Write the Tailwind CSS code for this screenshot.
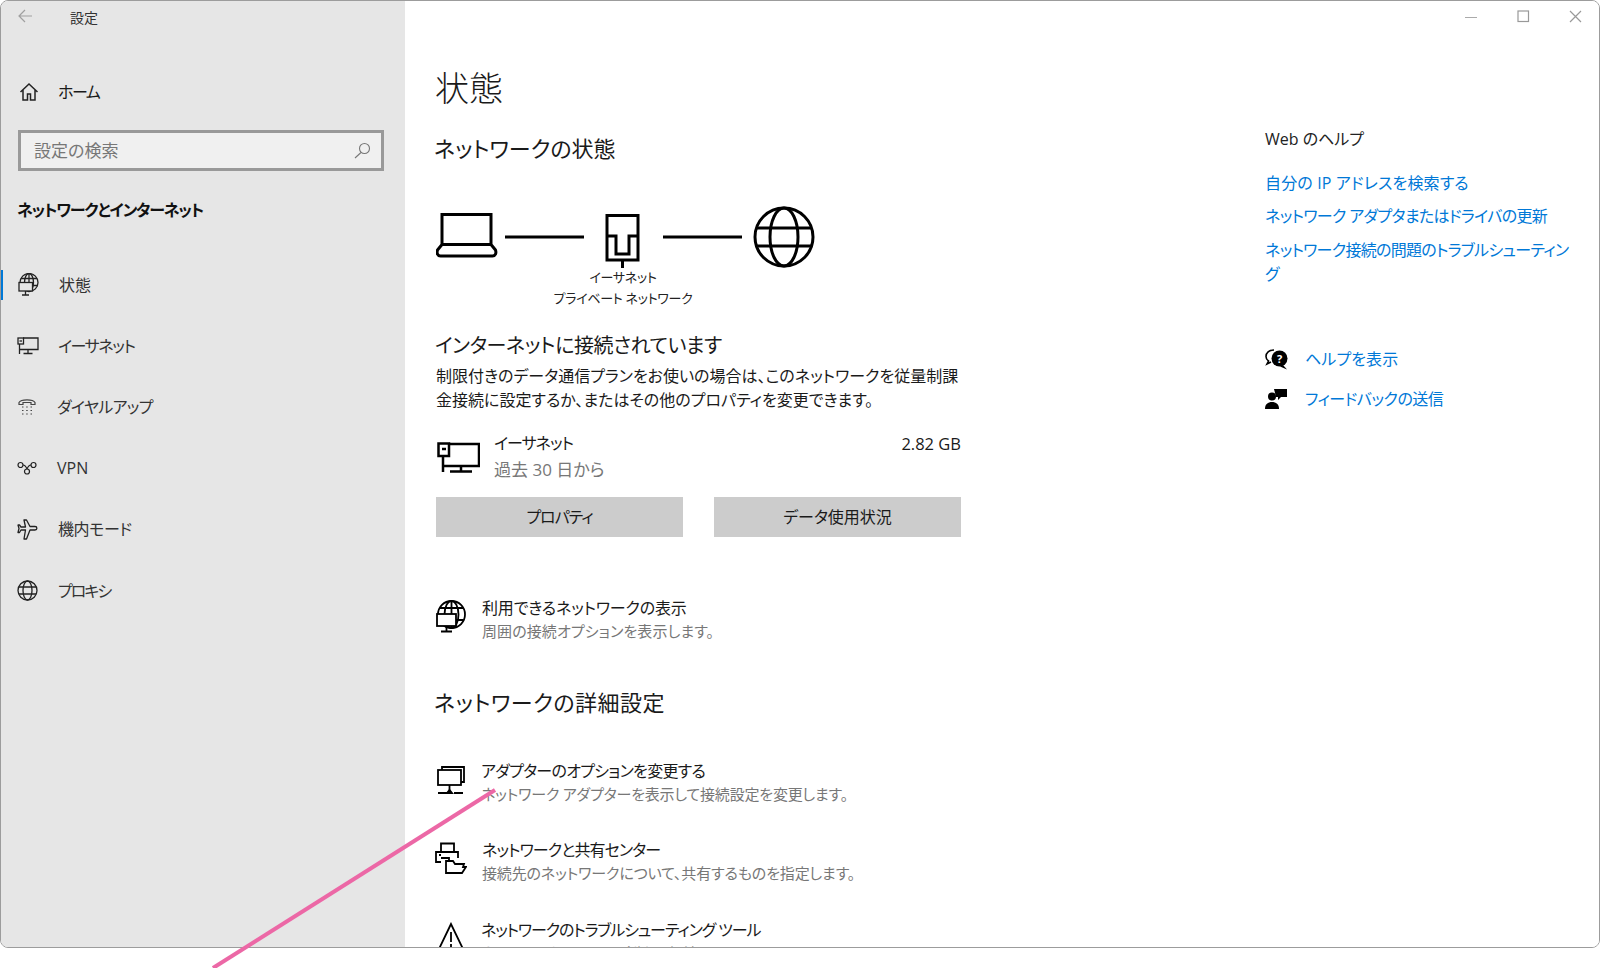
<!DOCTYPE html>
<html lang="ja">
<head>
  <meta charset="UTF-8">
  <title>設定</title>
  <script src="https://cdn.jsdelivr.net/npm/@tailwindcss/browser@4"></script>
</head>
<body class="bg-white w-[1600px] h-[968px] overflow-hidden relative text-[#1a1a1a] font-['Open_Sans','Noto_Sans_CJK_JP',sans-serif] [font-feature-settings:'palt']">

  <!-- window -->
  <div class="w-[1600px] h-[948px] border border-[#9c9c9c] rounded-[8px] overflow-hidden flex">

    <!-- sidebar -->
    <aside class="w-[404px] shrink-0 bg-[#e6e6e6]">
      <div class="h-[36px] flex items-center text-[14px] text-[#333]">
        <svg class="ml-[17px] -mt-[6px]" width="15" height="14" viewBox="0 0 15 14" fill="none" stroke="#a0a0a0" stroke-width="1.2"><path d="M14 7H1M7 1 1 7l6 6"/></svg>
        <span class="ml-[37px] -mt-[3px]">設定</span>
      </div>
      <div class="mt-[35px] h-[40px] flex items-center text-[16px]">
        <svg class="ml-[18px]" width="20" height="20" viewBox="0 0 20 20" fill="none" stroke="#222" stroke-width="1.5"><path d="M1.500 10 10 2l8.500 8M4 8v10h4.500v-6h3v6H16V8"/></svg>
        <span class="ml-[19px] tracking-[-1.500px]">ホーム</span>
      </div>
      <div class="mt-[18px] ml-[17px] w-[366px] h-[41px] border-[3px] border-[#999] bg-[#f0f0f0] flex items-center justify-between pl-[13px] pr-[10px] text-[17px] text-[#777]">
        <span>設定の検索</span>
        <svg width="17" height="17" viewBox="0 0 17 17" fill="none" stroke="#777" stroke-width="1.1"><circle cx="10.500" cy="6.500" r="5"/><path d="M7 10.500 1 16"/></svg>
      </div>
      <div class="mt-[27px] ml-[16px] h-[24px] leading-[24px] text-[16px] font-bold text-[#111] tracking-[-1.200px]">ネットワークとインターネット</div>

      <nav class="mt-[32px] text-[16px] text-[#333]">
        <div class="h-[61.200px] flex items-center">
          <span class="w-[2px] h-[30px] bg-[#0078d7] mr-[15px]"></span>
          <svg width="21" height="23" viewBox="0 0 21 23" fill="none" stroke="#222" stroke-width="1.3"><circle cx="11" cy="9.500" r="9"/><ellipse cx="11" cy="9.500" rx="4.500" ry="9"/><path d="M11 .500v10M3 5.500h16M3 12.500h17"/><rect x="1" y="9.500" width="13.500" height="8.500" fill="#e6e6e6"/><path d="M7.500 18v4M4 22h7"/></svg>
          <span class="ml-[20px]">状態</span>
        </div>
        <div class="h-[61.200px] flex items-center">
          <svg class="ml-[16px]" width="22" height="18" viewBox="0 0 22 18" fill="none" stroke="#222" stroke-width="1.3"><path d="M6 1h15v11.500H2M2.500 7v10M11 12.500V16.500M6.500 16.500h9"/><rect x="1" y="1" width="5.500" height="6"/><path d="M2.500 4h2.500"/></svg>
          <span class="ml-[19px] tracking-[-1.400px]">イーサネット</span>
        </div>
        <div class="h-[61.200px] flex items-center">
          <svg class="ml-[16px]" width="20" height="18" viewBox="0 0 20 18" fill="none" stroke="#444" stroke-width="1.2"><path d="M2 6.500V4.500C4 1 16 1 18 4.500v2h-4V4.500H6v2z"/><path d="M5 9h1.500M9.200 9h1.500M13.500 9H15M5 12.500h1.500M9.200 12.500h1.500M13.500 12.500H15M5 16h1.500M9.200 16h1.500M13.500 16H15"/></svg>
          <span class="ml-[20px] tracking-[-0.700px]">ダイヤルアップ</span>
        </div>
        <div class="h-[61.200px] flex items-center">
          <svg class="ml-[16px]" width="20" height="14" viewBox="0 0 20 14" fill="none" stroke="#222" stroke-width="1.2"><circle cx="3.500" cy="4" r="2.500"/><circle cx="16.500" cy="4" r="2.500"/><circle cx="10" cy="10.500" r="2.500"/><path d="M6 4c2 0 3 1.500 4 4M14 4c-2 0-3 1.500-4 4"/></svg>
          <span class="ml-[20px]">VPN</span>
        </div>
        <div class="h-[61.200px] flex items-center">
          <svg class="ml-[16px]" width="21" height="21" viewBox="0 0 21 21" fill="none" stroke="#222" stroke-width="1.3" stroke-linejoin="round"><path d="M7 1h2.500L13 7.500h5c2.500 0 2.500 3.500 0 3.500h-5L9.500 20H7l1.500-9H4l-1.500 2.500H1L2 9.500 1 6h1.500L4 8h4.500z"/></svg>
          <span class="ml-[20px] tracking-[-0.400px]">機内モード</span>
        </div>
        <div class="h-[61.200px] flex items-center">
          <svg class="ml-[16px]" width="21" height="21" viewBox="0 0 21 21" fill="none" stroke="#222" stroke-width="1.300"><circle cx="10.500" cy="10.500" r="9.500"/><ellipse cx="10.500" cy="10.500" rx="4.500" ry="9.500"/><path d="M2 7h17M2 14h17"/></svg>
          <span class="ml-[20px] tracking-[-2px]">プロキシ</span>
        </div>
      </nav>
    </aside>

    <!-- content -->
    <main class="flex-1 flex bg-white relative">
      <section class="w-[560px] pl-[31px] pt-[65px] shrink-0">
        <h1 class="-ml-[1px] h-[44px] leading-[44px] text-[34px] font-light">状態</h1>
        <h2 class="mt-[23px] -ml-[2px] h-[30px] leading-[30px] text-[22px]">ネットワークの状態</h2>

        <!-- diagram -->
        <div class="mt-[42px] w-[381px]">
          <svg class="block" width="381" height="63" viewBox="0 0 381 63" fill="none" stroke="#000" stroke-width="3">
            <path d="M6 9.500h49v30H6zM6 39.500 1.500 45c-1 3 0 6 3 6h52c3 0 4-3 3-6L55 39.500"/>
            <path d="M69 32h79M227 32h79"/>
            <path d="M171 10.500h31v44.500h-31zM171 31h9v18h13V31h9M186.500 55v8"/>
            <circle cx="348" cy="32" r="29"/>
            <ellipse cx="348" cy="32" rx="14" ry="29"/>
            <path d="M320 23h56M320 41h56"/>
          </svg>
          <div class="-mt-[1px] w-[374px] text-center text-[13px] leading-[21px] text-[#222] tracking-[-0.300px]">イーサネット<br>プライベート ネットワーク</div>
        </div>

        <h3 class="-ml-[1px] mt-[23px] h-[28px] leading-[28px] text-[20px] tracking-[-0.400px]">インターネットに接続されています</h3>
        <p class="mt-[4px] w-[530px] text-[16px] leading-[24px]">制限付きのデータ通信プランをお使いの場合は、このネットワークを従量制課<br>金接続に設定するか、またはその他のプロパティを変更できます。</p>

        <div class="mt-[18px] w-[525px] flex">
          <svg class="ml-[1px] mt-[12px]" width="43" height="31" viewBox="0 0 43 31" fill="none" stroke="#000" stroke-width="2.500"><path d="M12 2h30v22H6M6 14v16M24 24v5.500M13 29.500h22"/><rect x="1.500" y="1.500" width="10.500" height="12.500"/><path d="M5 7h4"/></svg>
          <div class="ml-[14px] text-[16px] leading-[27px]">
            <div class="tracking-[-1px]">イーサネット</div>
            <div class="text-[17px] text-[#777] -mt-[1px]">過去 30 日から</div>
          </div>
          <div class="ml-auto text-[16.500px] leading-[27px]">2.82 GB</div>
        </div>

        <div class="mt-[14px] flex gap-[31px] text-[16px]">
          <button class="w-[247px] h-[40px] bg-[#cccccc] tracking-[-1px]">プロパティ</button>
          <button class="w-[247px] h-[40px] bg-[#cccccc]">データ使用状況</button>
        </div>

        <div class="mt-[59px] flex">
          <svg class="mt-[4px]" width="30" height="33" viewBox="0 0 30 33" fill="none" stroke="#000" stroke-width="1.800"><circle cx="15.500" cy="14.500" r="13.500"/><ellipse cx="15.500" cy="14.500" rx="7" ry="13.500"/><path d="M15.500 1v26M3.500 8h24M3.500 20h24"/><rect x="1" y="14" width="19" height="12" fill="#fff"/><path d="M10.500 26v5.500M5 31.500h11"/></svg>
          <div class="ml-[16px] leading-[24px]">
            <div class="text-[16px] tracking-[-0.150px]">利用できるネットワークの表示</div>
            <div class="text-[15px] text-[#777] -mt-[1px] tracking-[0.100px]">周囲の接続オプションを表示します。</div>
          </div>
        </div>

        <h2 class="mt-[43px] -ml-[2px] h-[32px] leading-[32px] text-[22px] tracking-[0.500px]">ネットワークの詳細設定</h2>

        <div class="mt-[41px] flex">
          <svg class="ml-[1px] mt-[7px]" width="28" height="30" viewBox="0 0 28 30" fill="none" stroke="#000" stroke-width="1.800"><path d="M5 4V1h22v15h-3"/><rect x="1" y="4" width="23" height="15"/><path d="M12.500 19v5M1 27h9M17 27h9"/><path d="M10 27l2.500-3 2.500 3h-5z"/></svg>
          <div class="ml-[16px] leading-[24px]">
            <div class="text-[16px] tracking-[-0.700px]">アダプターのオプションを変更する</div>
            <div class="text-[15px] text-[#777] -mt-[1px] tracking-[-0.200px]">ネットワーク アダプターを表示して接続設定を変更します。</div>
          </div>
        </div>

        <div class="mt-[32px] flex">
          <svg class="-ml-[1px] mt-[4px]" width="32" height="33" viewBox="0 0 32 33" fill="none" stroke="#000" stroke-width="1.800"><path d="M6 10V1.500h13V10"/><path d="M6 20H1V10h22v6"/><path d="M6 16h8v4M11 31V19h7l2 3h9l-1 3h3l-4 6z"/><path d="M4 13h2"/></svg>
          <div class="ml-[15px] leading-[24px]">
            <div class="text-[16px] tracking-[-0.900px]">ネットワークと共有センター</div>
            <div class="text-[15px] text-[#777] -mt-[1px] tracking-[-0.150px]">接続先のネットワークについて、共有するものを指定します。</div>
          </div>
        </div>

        <div class="mt-[33px] flex">
          <svg class="ml-[1px] mt-[4px]" width="28" height="30" viewBox="0 0 28 30" fill="none" stroke="#000" stroke-width="1.800"><path d="M14 2 1.500 28h25zM14 10v10M14 22v3"/></svg>
          <div class="ml-[16px] leading-[24px]">
            <div class="text-[16px] tracking-[-1.100px]">ネットワークのトラブルシューティング ツール</div>
            <div class="text-[15px] text-[#777] -mt-[1px]">ネットワークの問題を診断し、解決します。</div>
          </div>
        </div>
      </section>

      <section class="ml-[300px] flex-1 relative">
        <!-- window buttons -->
        <div class="absolute top-[8px] right-[16px] flex gap-[37px] items-center">
          <svg width="15" height="15" viewBox="0 0 15 15" stroke="#aaa" stroke-width="1.200" fill="none"><path d="M1 8.500h12"/></svg>
          <svg width="15" height="15" viewBox="0 0 15 15" stroke="#999" stroke-width="1.200" fill="none"><rect x="2" y="2" width="10.500" height="10.500"/></svg>
          <svg width="15" height="15" viewBox="0 0 15 15" stroke="#999" stroke-width="1.200" fill="none"><path d="M2 2l11 11M13 2 2 13"/></svg>
        </div>

        <div class="pt-[126px] text-[16px] leading-[24px] text-[#0078d7]">
          <div class="text-[#222]">Web のヘルプ</div>
          <div class="mt-[20px] tracking-[0.150px]">自分の IP アドレスを検索する</div>
          <div class="mt-[9px] tracking-[-0.650px]">ネットワーク アダプタまたはドライバの更新</div>
          <div class="mt-[10px] tracking-[-0.700px] whitespace-nowrap">ネットワーク接続の問題のトラブルシューティン<br>グ</div>
          <div class="mt-[61px] flex items-center gap-[17px]">
            <svg width="23" height="21" viewBox="0 0 23 21" fill="none"><path d="M9 1C4 1 1 4 1 7.500c0 2 1 3.500 2.500 4.500L2 15l4-2" stroke="#000" stroke-width="1.600"/><circle cx="14.500" cy="9.500" r="8" fill="#000"/><path d="m18 16 4 4.500-7-3z" fill="#000"/><text x="14.500" y="13.500" text-anchor="middle" font-size="11" font-weight="700" fill="#fff">?</text></svg>
            <span class="tracking-[0.100px]">ヘルプを表示</span>
          </div>
          <div class="mt-[16px] flex items-center gap-[17px]">
            <svg width="23" height="22" viewBox="0 0 23 22" fill="#000"><circle cx="7" cy="8.500" r="4"/><path d="M0 21c0-5 3-7 7-7s7 2 7 7z"/><path d="M9 1h13v8h-6l-3 3V9h-2z"/></svg>
            <span class="tracking-[-0.500px]">フィードバックの送信</span>
          </div>
        </div>
      </section>
    </main>
  </div>

  <!-- callout arrow -->
  <svg class="absolute left-0 top-0 pointer-events-none" width="1600" height="968" viewBox="0 0 1600 968" fill="none"><path d="M213 968 495 790" stroke="#ec68a6" stroke-width="4"/></svg>
</body>
</html>
